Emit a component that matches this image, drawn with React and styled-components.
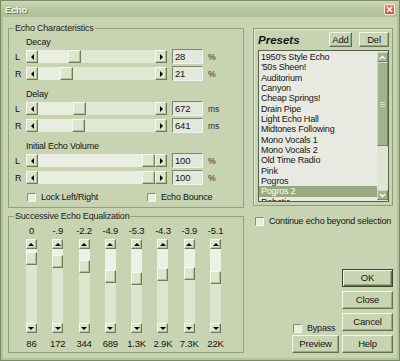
import React from "react";
import styled, { createGlobalStyle, css } from "styled-components";

const FONT = `"Liberation Sans", Arial, sans-serif`;

const GlobalStyle = createGlobalStyle`
  html, body { margin: 0; padding: 0; }
  body {
    background: #c8d4b1;
    font-family: ${FONT};
    font-size: 9px;
    letter-spacing: -0.2px;
    color: #141414;
  }
  *, *::before, *::after { box-sizing: border-box; }
`;

const Window = styled.div`
  width: 400px;
  height: 361px;
  display: flex;
  flex-direction: column;
  border: 1px solid #7c8b64;
  background: #c8d4b1;
  overflow: hidden;
`;

const TitleBar = styled.div`
  height: 16px;
  flex: none;
  display: flex;
  align-items: center;
  justify-content: space-between;
  padding: 0 4px 0 4px;
  background: linear-gradient(#cbd7b6, #b7c5a0 50%, #b1bf99);
`;

const TitleText = styled.span`
  font-weight: bold;
  font-size: 9.5px;
  letter-spacing: -0.3px;
  color: #f4f7ee;
  text-shadow: 1px 1px 0 #6b7856;
`;

const CloseButton = styled.div`
  width: 11px;
  height: 11px;
  border: 1px solid #fbeee8;
  border-radius: 2px;
  background: linear-gradient(#e98a6a, #d2472b);
  display: flex;
  align-items: center;
  justify-content: center;
`;

const Body = styled.div`
  flex: 1;
  min-height: 0;
  display: flex;
  gap: 9px;
  padding: 6px 4px 5px 5px;
  border: 2px solid #b4c29c;
  border-top: 0;
`;

const LeftColumn = styled.div`
  width: 236px;
  flex: none;
  display: flex;
  flex-direction: column;
  gap: 3px;
`;

const RightColumn = styled.div`
  width: 140px;
  flex: none;
  display: flex;
  flex-direction: column;
  padding-top: 5px;
`;

const Group = styled.fieldset`
  margin: 0;
  min-width: 0;
  border: 1px solid #93a17c;
  padding: ${(p) => p.$pad};
  ${(p) => (p.$h ? `height: ${p.$h}px; flex: none;` : "flex: 1;")}
`;

const Caption = styled.legend`
  padding: 0 1px;
  line-height: 11px;
  color: #1b1b1b;
`;

/* ---------- horizontal sliders ---------- */

const Section = styled.div`
  display: flex;
  flex-direction: column;
  & + & {
    margin-top: 9px;
  }
`;

const SectionLabel = styled.div`
  height: 13px;
  line-height: 11px;
  padding-left: 12px;
`;

const SliderRow = styled.div`
  display: flex;
  align-items: center;
  height: 13px;
  & + & {
    margin-top: 4px;
  }
`;

const SideLabel = styled.span`
  width: 12px;
  padding-left: 1px;
  flex: none;
`;

const HSlider = styled.div`
  width: 141px;
  height: 13px;
  flex: none;
  display: flex;
`;

const raised = css`
  background: #dde5cd;
  border: 1px solid;
  border-color: #f6f9f0 #6f7c5a #6f7c5a #f6f9f0;
  box-shadow: inset -1px -1px 0 #b4c09d;
`;

const ArrowButton = styled.div`
  ${raised}
  width: ${(p) => p.$w}px;
  height: ${(p) => p.$h}px;
  flex: none;
  display: flex;
  align-items: center;
  justify-content: center;
`;

const Tri = styled.span`
  width: 0;
  height: 0;
  border: 3px solid transparent;
  ${(p) =>
    ({
      left: "border-left-width: 0; border-right-color: #000;",
      right: "border-right-width: 0; border-left-color: #000;",
      up: "border-top-width: 0; border-bottom-color: #000;",
      down: "border-bottom-width: 0; border-top-color: #000;",
    })[p.$dir]}
`;

const HTrack = styled.div`
  flex: 1;
  display: flex;
  background: #e0e7d3;
`;

const HFill = styled.div`
  flex: none;
  background: #e9eee0;
`;

const HThumb = styled.div`
  ${raised}
  width: 13px;
  flex: none;
`;

const ValueBox = styled.div`
  width: 31px;
  height: 15px;
  margin-left: 5px;
  flex: none;
  padding-left: 2px;
  line-height: 13px;
  font-size: 9.5px;
  background: #e4e7dc;
  border: 1px solid;
  border-color: #7b8766 #f1f4ea #f1f4ea #7b8766;
`;

const Unit = styled.span`
  margin-left: 5px;
  font-size: 8.5px;
  color: #2a2a2a;
`;

/* ---------- checkboxes ---------- */

const CheckRow = styled.div`
  display: flex;
  align-items: center;
  height: 10px;
  margin-top: ${(p) => p.$top ?? 0}px;
  padding-left: ${(p) => p.$indent ?? 0}px;
`;

const CheckItem = styled.label`
  display: flex;
  align-items: center;
  gap: 5px;
  width: ${(p) => (p.$w ? `${p.$w}px` : "auto")};
  white-space: nowrap;
`;

const Box = styled.span`
  width: 9px;
  height: 9px;
  flex: none;
  background: #e9ede0;
  border: 1px solid;
  border-color: #869172 #f5f8ef #f5f8ef #869172;
`;

/* ---------- EQ ---------- */

const EqGrid = styled.div`
  display: grid;
  grid-template-columns: repeat(8, 26.3px);
  margin-left: 4.3px;
`;

const EqColumn = styled.div`
  display: flex;
  flex-direction: column;
  align-items: center;
`;

const EqValue = styled.div`
  height: 10px;
  line-height: 10px;
  margin-bottom: 3px;
  font-size: 9.5px;
`;

const VSlider = styled.div`
  width: 11px;
  height: 94px;
  display: flex;
  flex-direction: column;
`;

const VTrack = styled.div`
  flex: 1;
  display: flex;
  flex-direction: column;
  background: #dde5cf;
`;

const VUpper = styled.div`
  flex: none;
  background: #edf1e5;
`;

const VThumb = styled.div`
  ${raised}
  height: 13px;
  flex: none;
`;

const EqFreq = styled.div`
  margin-top: 6px;
  line-height: 10px;
  font-size: 9.5px;
  white-space: nowrap;
`;

/* ---------- presets ---------- */

const PresetPanel = styled.div`
  height: 178px;
  flex: none;
  display: flex;
  flex-direction: column;
  gap: 3px;
  padding: 3px 3px 0 4px;
  border: 1px solid #8f9d78;
  box-shadow: inset 1px 1px 0 #e3e9d5;
`;

const PresetHeader = styled.div`
  height: 15px;
  display: flex;
  align-items: center;
`;

const PresetTitle = styled.span`
  flex: 1;
  font-weight: bold;
  font-style: italic;
  font-size: 11.5px;
  letter-spacing: 0;
  color: #111;
`;

const Button = styled.button`
  width: ${(p) => p.$w}px;
  height: ${(p) => p.$h ?? 18}px;
  margin: 0 ${(p) => p.$mr ?? 0}px 0 0;
  padding: 0;
  flex: none;
  font: inherit;
  font-size: 9.5px;
  letter-spacing: -0.2px;
  color: #141414;
  line-height: 1;
  background: #c9d5b2;
  border: 1px solid;
  border-color: #f2f6ea #66724f #66724f #f2f6ea;
  box-shadow: inset -1px -1px 0 #9dab84;
  ${(p) =>
    p.$default &&
    css`
      border-color: #3b442e;
      box-shadow: inset 1px 1px 0 #f2f6ea, inset -1px -1px 0 #66724f,
        inset -2px -2px 0 #9dab84;
    `}
`;

const ListBox = styled.div`
  height: 152px;
  flex: none;
  display: flex;
  background: #e8eae1;
  border: 1px solid #56614a;
`;

const ListItems = styled.div`
  flex: 1;
  min-width: 0;
  overflow: hidden;
  padding-top: 1px;
`;

const ListItem = styled.div`
  height: 10.33px;
  line-height: 10.33px;
  padding-left: 2px;
  white-space: nowrap;
  ${(p) =>
    p.$selected &&
    css`
      background: #9aaa80;
      color: #fff;
    `}
`;

const ScrollBar = styled.div`
  width: 11px;
  flex: none;
  display: flex;
  flex-direction: column;
  padding: 1px 0;
  background: #dfe5d3;
`;

const greenButton = css`
  background: #a3b28a;
  border: 1px solid;
  border-color: #cfdabd #76845f #76845f #cfdabd;
`;

const ScrollArrow = styled.div`
  ${greenButton}
  height: 10px;
  flex: none;
  display: flex;
  align-items: center;
  justify-content: center;
`;

const ScrollThumb = styled.div`
  ${greenButton}
  height: 84px;
  flex: none;
  display: flex;
  flex-direction: column;
  align-items: center;
  justify-content: center;
  gap: 1px;
`;

const Grip = styled.span`
  width: 5px;
  height: 1px;
  background: #d6e0c6;
`;

const ScrollRest = styled.div`
  flex: 1;
`;

const BottomArea = styled.div`
  margin-top: auto;
  display: flex;
  justify-content: flex-end;
  align-items: flex-end;
  gap: 3px;
`;

const PreviewStack = styled.div`
  display: flex;
  flex-direction: column;
  align-items: flex-start;
  gap: 2px;
`;

const ButtonStack = styled.div`
  display: flex;
  flex-direction: column;
  gap: 4px;
`;

/* ---------- data ---------- */

const sections = [
  { label: "Decay", unit: "%", max: 100, values: [["L", 28], ["R", 21]] },
  { label: "Delay", unit: "ms", max: 2000, values: [["L", 672], ["R", 641]] },
  { label: "Initial Echo Volume", unit: "%", max: 100, values: [["L", 100], ["R", 100]] },
];

const eqBands = [
  ["0", 0, "86"],
  ["-.9", 0.9, "172"],
  ["-2.2", 2.2, "344"],
  ["-4.9", 4.9, "689"],
  ["-5.3", 5.3, "1.3K"],
  ["-4.3", 4.3, "2.9K"],
  ["-3.9", 3.9, "7.3K"],
  ["-5.1", 5.1, "22K"],
];

const presets = [
  "1950's Style Echo",
  "'50s Sheen!",
  "Auditorium",
  "Canyon",
  "Cheap Springs!",
  "Drain Pipe",
  "Light Echo Hall",
  "Midtones Following",
  "Mono Vocals 1",
  "Mono Vocals 2",
  "Old Time Radio",
  "Pink",
  "Pogros",
  "Pogros 2",
  "Robotic",
];

const Check = ({ children, w }) => (
  <CheckItem $w={w}>
    <Box />
    {children}
  </CheckItem>
);

const Chevron = ({ up }) => (
  <svg width="7" height="5" viewBox="0 0 7 5">
    <polyline
      points={up ? "1,4 3.5,1.5 6,4" : "1,1 3.5,3.5 6,1"}
      fill="none"
      stroke="#fff"
      strokeWidth="1.4"
    />
  </svg>
);

export default function App() {
  return (
    <>
      <GlobalStyle />
      <Window>
        <TitleBar>
          <TitleText>Echo</TitleText>
          <CloseButton>
            <svg width="7" height="7" viewBox="0 0 7 7">
              <path d="M1 1L6 6M6 1L1 6" stroke="#fff" strokeWidth="1.6" />
            </svg>
          </CloseButton>
        </TitleBar>
        <Body>
          <LeftColumn>
            <Group $h={185} $pad="3px 0 0 5px">
              <Caption>Echo Characteristics</Caption>
              {sections.map((s) => (
                <Section key={s.label}>
                  <SectionLabel>{s.label}</SectionLabel>
                  {s.values.map(([side, v]) => (
                    <SliderRow key={side}>
                      <SideLabel>{side}</SideLabel>
                      <HSlider>
                        <ArrowButton $w={12} $h={13}>
                          <Tri $dir="left" />
                        </ArrowButton>
                        <HTrack>
                          <HFill style={{ width: Math.round((v / s.max) * 104 + 0.4) }} />
                          <HThumb />
                        </HTrack>
                        <ArrowButton $w={12} $h={13}>
                          <Tri $dir="right" />
                        </ArrowButton>
                      </HSlider>
                      <ValueBox>{v}</ValueBox>
                      <Unit>{s.unit}</Unit>
                    </SliderRow>
                  ))}
                </Section>
              ))}
              <CheckRow $top={8} $indent={13}>
                <Check w={120}>Lock Left/Right</Check>
                <Check>Echo Bounce</Check>
              </CheckRow>
            </Group>
            <Group $pad="4px 0 0 5px">
              <Caption>Successive Echo Equalization</Caption>
              <EqGrid>
                {eqBands.map(([label, db, freq]) => (
                  <EqColumn key={freq}>
                    <EqValue>{label}</EqValue>
                    <VSlider>
                      <ArrowButton $w={11} $h={10}>
                        <Tri $dir="up" />
                      </ArrowButton>
                      <VTrack>
                        <VUpper style={{ height: Math.round(2.5 + db * 3.85) }} />
                        <VThumb />
                      </VTrack>
                      <ArrowButton $w={11} $h={10}>
                        <Tri $dir="down" />
                      </ArrowButton>
                    </VSlider>
                    <EqFreq>{freq}</EqFreq>
                  </EqColumn>
                ))}
              </EqGrid>
            </Group>
          </LeftColumn>
          <RightColumn>
            <PresetPanel>
              <PresetHeader>
                <PresetTitle>Presets</PresetTitle>
                <Button $w={23} $h={15} $mr={7}>
                  Add
                </Button>
                <Button $w={30} $h={15}>
                  Del
                </Button>
              </PresetHeader>
              <ListBox>
                <ListItems>
                  {presets.map((p) => (
                    <ListItem key={p} $selected={p === "Pogros 2"}>
                      {p}
                    </ListItem>
                  ))}
                </ListItems>
                <ScrollBar>
                  <ScrollArrow>
                    <Chevron up />
                  </ScrollArrow>
                  <ScrollThumb>
                    <Grip />
                    <Grip />
                    <Grip />
                  </ScrollThumb>
                  <ScrollRest />
                  <ScrollArrow>
                    <Chevron />
                  </ScrollArrow>
                </ScrollBar>
              </ListBox>
            </PresetPanel>
            <CheckRow $top={10} $indent={2}>
              <Check>Continue echo beyond selection</Check>
            </CheckRow>
            <BottomArea>
              <PreviewStack>
                <CheckRow $indent={1}>
                  <Check>Bypass</Check>
                </CheckRow>
                <Button $w={47}>Preview</Button>
              </PreviewStack>
              <ButtonStack>
                <Button $w={51} $default>
                  OK
                </Button>
                <Button $w={51}>Close</Button>
                <Button $w={51}>Cancel</Button>
                <Button $w={51}>Help</Button>
              </ButtonStack>
            </BottomArea>
          </RightColumn>
        </Body>
      </Window>
    </>
  );
}
